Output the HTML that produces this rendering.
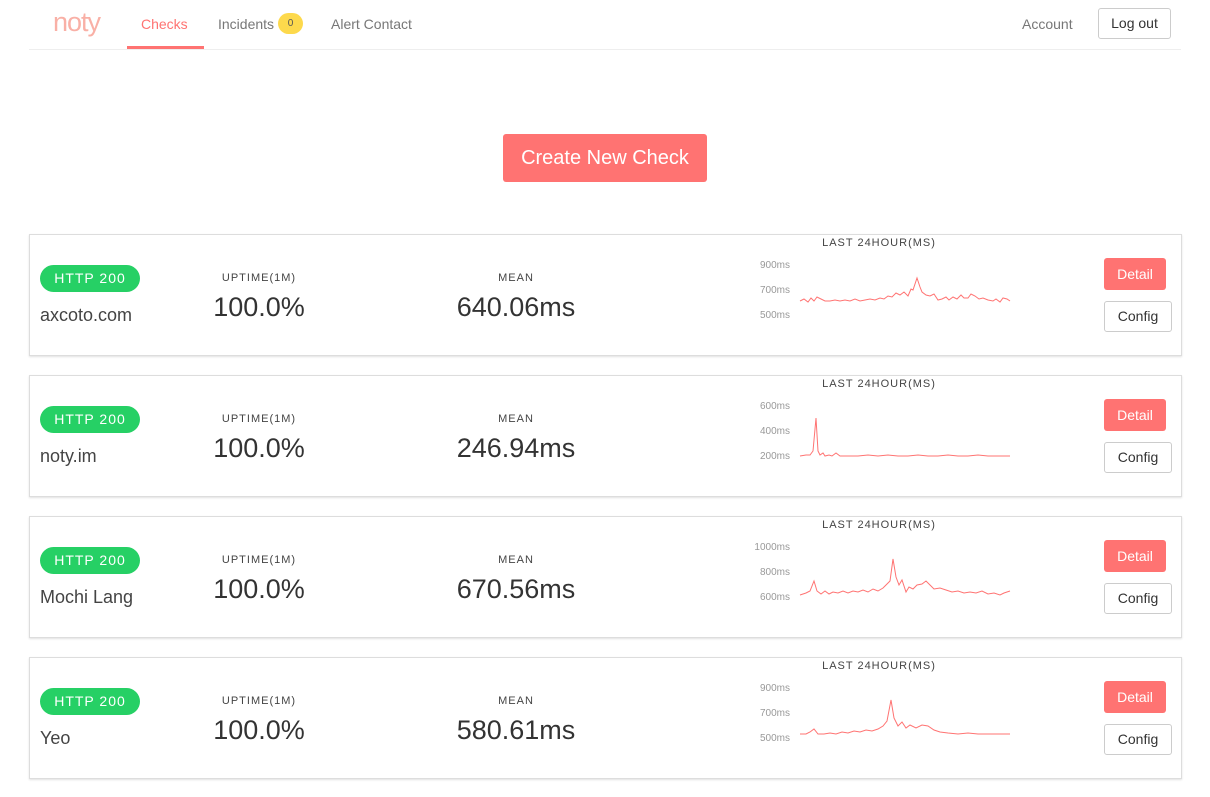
<!DOCTYPE html>
<html><head><meta charset="utf-8">
<style>
*{box-sizing:border-box;margin:0;padding:0}
body{width:1210px;height:797px;background:#fff;font-family:"Liberation Sans",sans-serif;color:#333;position:relative;overflow:hidden}
.nav{position:absolute;left:29px;top:0;width:1152px;height:50px;border-bottom:1px solid #eee}
.logo{position:absolute;left:24px;top:7px;font-size:27px;color:#f9b0a6;font-weight:300;letter-spacing:-1px}
.nl{position:absolute;top:16px;font-size:14px;color:#777}
.act{color:#ff7372}
.ul{position:absolute;left:98px;top:46px;width:77px;height:3px;background:#ff7372}
.bdg{position:absolute;left:249px;top:13px;width:25px;height:21px;border-radius:11px;background:#fdd94c;font-size:10px;text-align:center;line-height:21px;color:#555}
.lo{position:absolute;left:1069px;top:8px;width:73px;height:31px;border:1px solid #ccc;border-radius:3px;font-size:14px;text-align:center;line-height:29px;color:#333}
.cta{position:absolute;left:503px;top:134px;width:204px;height:48px;background:#ff7372;color:#fff;font-size:20px;text-align:center;line-height:48px;border-radius:3px}
.card{position:absolute;left:29px;width:1153px;height:122px;border:1px solid #ddd;box-shadow:0 1px 2px rgba(0,0,0,.12)}
.http{position:absolute;left:10px;top:30px;width:100px;height:27px;border-radius:14px;background:#26d065;color:#fff;font-size:14px;letter-spacing:1px;text-align:center;line-height:27px}
.name{position:absolute;left:10px;top:70px;font-size:18px;color:#444}
.lab{position:absolute;font-size:11px;letter-spacing:1px;color:#444;text-align:center;width:200px}
.val{position:absolute;font-size:27px;color:#333;text-align:center;width:240px;top:57px}
.ax{position:absolute;left:700px;width:60px;text-align:right;font-size:10px;color:#999}
.det{position:absolute;left:1074px;top:23px;width:62px;height:32px;background:#ff7372;color:#fff;font-size:14px;text-align:center;line-height:32px;border-radius:3px}
.cfg{position:absolute;left:1074px;top:66px;width:68px;height:31px;border:1px solid #ccc;border-radius:3px;font-size:14px;text-align:center;line-height:29px;color:#333}
svg{position:absolute;left:768px;top:30px}
</style></head><body>
<div class="nav">
<div class="logo">noty</div>
<div class="nl act" style="left:112px">Checks</div>
<div class="ul"></div>
<div class="nl" style="left:189px">Incidents</div>
<div class="bdg">0</div>
<div class="nl" style="left:302px">Alert Contact</div>
<div class="nl" style="left:993px">Account</div>
<div class="lo">Log out</div>
</div>
<div class="cta">Create New Check</div>

<div class="card" style="top:234px">
<div class="http">HTTP 200</div><div class="name">axcoto.com</div>
<div class="lab" style="left:129px;top:37px">UPTIME(1M)</div><div class="val" style="left:109px">100.0%</div>
<div class="lab" style="left:386px;top:37px">MEAN</div><div class="val" style="left:366px">640.06ms</div>
<div class="lab" style="left:749px;top:2px">LAST 24HOUR(MS)</div>
<div class="ax" style="top:25px">900ms</div><div class="ax" style="top:50px">700ms</div><div class="ax" style="top:75px">500ms</div>
<svg width="220" height="60"><polyline fill="none" stroke="#ff7372" stroke-width="1" points="2,36 6,34 10,37 13,33 16,36 19,32 23,34 27,36 32,36 37,35 42,36 47,35 52,36 57,34 62,36 67,35 72,34 77,35 82,33 86,34 90,31 94,32 98,28 102,30 106,27 110,31 113,24 115,25 119,13 122,22 124,27 128,30 132,31 136,29 140,35 144,34 148,32 151,35 155,32 159,34 163,30 166,33 170,33 173,29 177,31 181,34 185,33 190,35 195,36 198,34 202,37 205,33 209,34 212,36"/></svg>
<div class="det">Detail</div><div class="cfg">Config</div>
</div>

<div class="card" style="top:375px">
<div class="http">HTTP 200</div><div class="name">noty.im</div>
<div class="lab" style="left:129px;top:37px">UPTIME(1M)</div><div class="val" style="left:109px">100.0%</div>
<div class="lab" style="left:386px;top:37px">MEAN</div><div class="val" style="left:366px">246.94ms</div>
<div class="lab" style="left:749px;top:2px">LAST 24HOUR(MS)</div>
<div class="ax" style="top:25px">600ms</div><div class="ax" style="top:50px">400ms</div><div class="ax" style="top:75px">200ms</div>
<svg width="220" height="60"><polyline fill="none" stroke="#ff7372" stroke-width="1" points="2,50 8,49 12,49 15,45 18,12 20,45 22,49 25,47 27,50 31,49 34,50 38,47 42,50 50,50 60,50 70,49 80,50 90,49 100,50 110,50 120,49 130,50 140,50 150,49 160,50 170,50 180,49 190,50 200,50 212,50"/></svg>
<div class="det">Detail</div><div class="cfg">Config</div>
</div>

<div class="card" style="top:516px">
<div class="http">HTTP 200</div><div class="name">Mochi Lang</div>
<div class="lab" style="left:129px;top:37px">UPTIME(1M)</div><div class="val" style="left:109px">100.0%</div>
<div class="lab" style="left:386px;top:37px">MEAN</div><div class="val" style="left:366px">670.56ms</div>
<div class="lab" style="left:749px;top:2px">LAST 24HOUR(MS)</div>
<div class="ax" style="top:25px">1000ms</div><div class="ax" style="top:50px">800ms</div><div class="ax" style="top:75px">600ms</div>
<svg width="220" height="60"><polyline fill="none" stroke="#ff7372" stroke-width="1" points="2,48 8,46 12,44 16,34 19,44 23,47 27,44 31,47 35,45 40,46 45,44 50,46 55,44 60,45 65,43 70,45 75,42 80,44 85,41 88,38 92,34 95,12 98,30 101,38 104,33 108,45 111,40 115,42 119,38 124,37 128,34 132,38 136,42 142,41 148,43 154,45 160,44 166,46 172,45 178,46 184,44 190,47 196,46 202,48 206,46 212,44"/></svg>
<div class="det">Detail</div><div class="cfg">Config</div>
</div>

<div class="card" style="top:657px">
<div class="http">HTTP 200</div><div class="name">Yeo</div>
<div class="lab" style="left:129px;top:37px">UPTIME(1M)</div><div class="val" style="left:109px">100.0%</div>
<div class="lab" style="left:386px;top:37px">MEAN</div><div class="val" style="left:366px">580.61ms</div>
<div class="lab" style="left:749px;top:2px">LAST 24HOUR(MS)</div>
<div class="ax" style="top:25px">900ms</div><div class="ax" style="top:50px">700ms</div><div class="ax" style="top:75px">500ms</div>
<svg width="220" height="60"><polyline fill="none" stroke="#ff7372" stroke-width="1" points="2,46 8,46 12,44 16,41 20,46 26,46 32,45 38,46 44,44 50,45 56,43 62,44 68,42 74,43 80,41 85,38 89,33 93,12 96,30 100,38 104,34 108,40 112,37 118,40 124,37 130,38 136,42 142,44 150,45 160,46 170,45 180,46 190,46 200,46 212,46"/></svg>
<div class="det">Detail</div><div class="cfg">Config</div>
</div>
</body></html>
